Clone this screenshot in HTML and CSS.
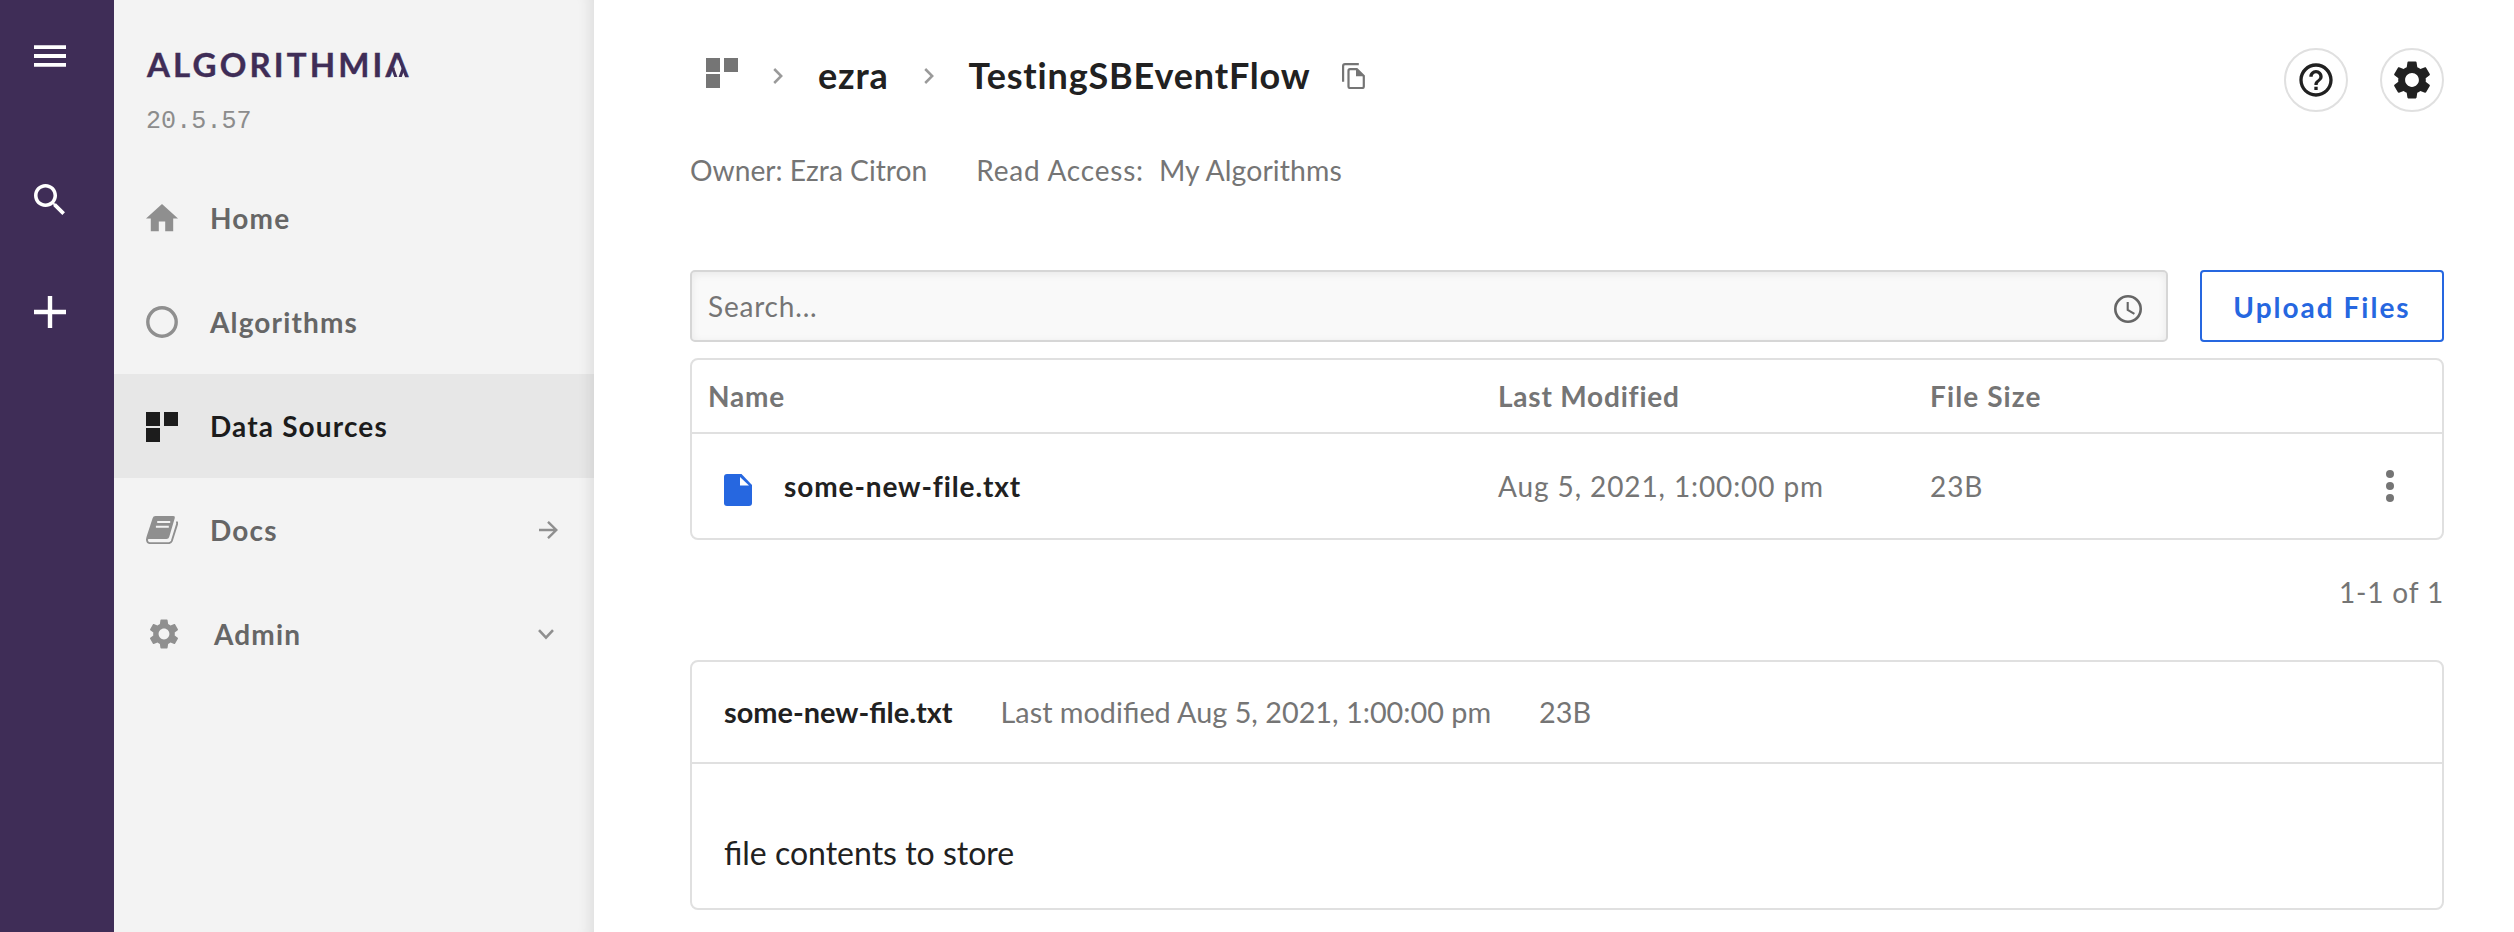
FILE: index.html
```html
<!DOCTYPE html>
<html lang="en">
<head>
<meta charset="utf-8">
<title>TestingSBEventFlow</title>
<link rel="stylesheet" href="styles.css">
</head>
<body>
<div class="app">
  <div class="rail">
    <svg class="rail-menu" viewBox="0 0 32 22"><path d="M0 2.1h32M0 11h32M0 19.9h32" stroke="#fff" stroke-width="3.8"/></svg>
    <svg class="rail-search" viewBox="3 3 17.5 17.5"><path fill="#fff" d="M15.5 14h-.79l-.28-.27C15.41 12.59 16 11.11 16 9.5 16 5.91 13.09 3 9.5 3S3 5.91 3 9.5 5.91 16 9.5 16c1.61 0 3.09-.59 4.23-1.57l.27.28v.79l5 4.99L20.49 19l-4.99-5zm-6 0C7.01 14 5 11.99 5 9.5S7.01 5 9.5 5 14 7.01 14 9.5 11.99 14 9.5 14z"/></svg>
    <svg class="rail-add" viewBox="0 0 32 32"><path d="M0 16h32M16 0v32" stroke="#fff" stroke-width="4.4"/></svg>
  </div>

  <aside class="sidebar">
    <div class="brand">ALGORITHMI<span class="brand-end">A<svg class="brand-mark" viewBox="0 0 24 24"><path d="M12 6.5L19.2 24.5H4.8Z" fill="#f3f3f3"/><path d="M6.6 15l3.4 9.4M17.4 15l-3.4 9.4" stroke="#3f2d57" stroke-width="3"/></svg></span></div>
    <div class="version">20.5.57</div>
    <nav class="nav">
      <a class="nav-item"><svg class="ico-home" viewBox="2 3 20 17.5" preserveAspectRatio="none"><path fill="#8f8f8f" d="M10 20v-6h4v6h5v-8h3L12 3 2 12h3v8z"/></svg><span>Home</span></a>
      <a class="nav-item"><svg class="ico-32" viewBox="0 0 32 32"><circle cx="16" cy="16" r="14.2" fill="none" stroke="#8f8f8f" stroke-width="3.4"/></svg><span>Algorithms</span></a>
      <a class="nav-item active"><svg class="ico-grid" viewBox="0 0 32 30"><path fill="#1c1c1c" d="M0 0h14v14H0zM18 0h14v14H18zM0 16h14v14H0z"/></svg><span>Data Sources</span></a>
      <a class="nav-item"><svg class="ico-book" viewBox="0 0 32 28"><path fill="#8f8f8f" d="M9.5 0H27.3Q29.4 0 28.8 2L23.2 21Q22.6 23 20.5 23H3Q1 23 0 24.5Q0 22 .8 20L6.6 2.2Q7.2 0 9.5 0Z"/><path fill="none" stroke="#8f8f8f" stroke-width="1.9" d="M30.3 5.8Q31.6 6.5 31 8.4L25.8 25Q25 27.1 22.6 27.1H4Q1 27.1.9 23"/><path stroke="#f3f3f3" stroke-width="1.9" d="M11.2 6H24.2M9.9 10.7H22.8"/></svg><span>Docs</span><svg class="nav-arrow" viewBox="0 0 19 18"><path fill="none" stroke="#8f8f8f" stroke-width="2.4" d="M0 9H17M9 .8L17.3 9L9 17.2"/></svg></a>
      <a class="nav-item"><svg class="ico-gear" viewBox="0 0 24 24"><path fill="#8f8f8f" d="M19.14 12.94c.04-.3.06-.61.06-.94 0-.32-.02-.64-.07-.94l2.03-1.58c.18-.14.23-.41.12-.61l-1.92-3.32c-.12-.22-.37-.29-.59-.22l-2.39.96c-.5-.38-1.03-.7-1.62-.94l-.36-2.54c-.04-.24-.24-.41-.48-.41h-3.84c-.24 0-.43.17-.47.41l-.36 2.54c-.59.24-1.13.57-1.62.94l-2.39-.96c-.22-.08-.47 0-.59.22L2.74 8.87c-.12.21-.08.47.12.61l2.03 1.58c-.05.3-.09.63-.09.94s.02.64.07.94l-2.03 1.58c-.18.14-.23.41-.12.61l1.92 3.32c.12.22.37.29.59.22l2.39-.96c.5.38 1.03.7 1.62.94l.36 2.54c.05.24.24.41.48.41h3.84c.24 0 .44-.17.47-.41l.36-2.54c.59-.24 1.13-.56 1.62-.94l2.39.96c.22.08.47 0 .59-.22l1.92-3.32c.12-.22.07-.47-.12-.61l-2.01-1.58zM12 15.6c-1.98 0-3.6-1.62-3.6-3.6s1.62-3.6 3.6-3.6 3.6 1.62 3.6 3.6-1.62 3.6-3.6 3.6z"/></svg><span>Admin</span><svg class="nav-chevron" viewBox="0 0 16 11"><path fill="none" stroke="#8f8f8f" stroke-width="2.6" d="M1 1.2L8 8.6L15 1.2"/></svg></a>
    </nav>
  </aside>

  <main class="main">
    <header class="header">
      <div class="crumbs">
        <svg class="ico-grid" viewBox="0 0 32 30"><path fill="#757575" d="M0 0h14v14H0zM18 0h14v14H18zM0 16h14v14H0z"/></svg>
        <svg class="crumb-sep first" viewBox="0 0 10 16"><path fill="none" stroke="#9a9a9a" stroke-width="2.5" d="M1.2 1L8.2 8L1.2 15"/></svg>
        <span class="crumb owner">ezra</span>
        <svg class="crumb-sep second" viewBox="0 0 10 16"><path fill="none" stroke="#9a9a9a" stroke-width="2.5" d="M1.2 1L8.2 8L1.2 15"/></svg>
        <span class="crumb">TestingSBEventFlow</span>
        <svg class="ico-copy" viewBox="0 0 24 26"><path fill="none" stroke="#757575" stroke-width="2.2" d="M1.1 18.8V3Q1.1 1.1 3 1.1H16.8M8 6.2H14.8L21.8 13V23.5Q21.8 25 20.3 25H8Q6.5 25 6.5 23.5V7.7Q6.5 6.2 8 6.2Z"/><path fill="#757575" d="M14 6.2V13.2H22Z"/></svg>
      </div>
      <div class="actions">
        <button class="round"><svg class="ico-help" viewBox="0 0 24 24"><path fill="#212121" d="M11 18h2v-2h-2v2zm1-16C6.48 2 2 6.48 2 12s4.48 10 10 10 10-4.48 10-10S17.52 2 12 2zm0 18c-4.41 0-8-3.59-8-8s3.59-8 8-8 8 3.59 8 8-3.59 8-8 8zm0-14c-2.21 0-4 1.79-4 4h2c0-1.1.9-2 2-2s2 .9 2 2c0 2-3 1.75-3 5h2c0-2.25 3-2.5 3-5 0-2.21-1.79-4-4-4z"/></svg></button>
        <button class="round"><svg class="ico-settings" viewBox="0 0 24 24"><path fill="#212121" d="M19.14 12.94c.04-.3.06-.61.06-.94 0-.32-.02-.64-.07-.94l2.03-1.58c.18-.14.23-.41.12-.61l-1.92-3.32c-.12-.22-.37-.29-.59-.22l-2.39.96c-.5-.38-1.03-.7-1.62-.94l-.36-2.54c-.04-.24-.24-.41-.48-.41h-3.84c-.24 0-.43.17-.47.41l-.36 2.54c-.59.24-1.13.57-1.62.94l-2.39-.96c-.22-.08-.47 0-.59.22L2.74 8.87c-.12.21-.08.47.12.61l2.03 1.58c-.05.3-.09.63-.09.94s.02.64.07.94l-2.03 1.58c-.18.14-.23.41-.12.61l1.92 3.32c.12.22.37.29.59.22l2.39-.96c.5.38 1.03.7 1.62.94l.36 2.54c.05.24.24.41.48.41h3.84c.24 0 .44-.17.47-.41l.36-2.54c.59-.24 1.13-.56 1.62-.94l2.39.96c.22.08.47 0 .59-.22l1.92-3.32c.12-.22.07-.47-.12-.61l-2.01-1.58zM12 15.6c-1.98 0-3.6-1.62-3.6-3.6s1.62-3.6 3.6-3.6 3.6 1.62 3.6 3.6-1.62 3.6-3.6 3.6z"/></svg></button>
      </div>
    </header>

    <div class="meta">
      <span class="meta-owner">Owner: Ezra Citron</span>
      <span class="meta-label">Read Access:</span>
      <span class="meta-value">My Algorithms</span>
    </div>

    <div class="toolbar">
      <div class="search">
        <span>Search...</span>
        <svg class="ico-clock" viewBox="0 0 28 28"><circle cx="14" cy="14" r="12.7" fill="none" stroke="#666" stroke-width="2.6"/><path fill="none" stroke="#666" stroke-width="2.1" d="M13.7 7V14.8L20.4 18.8"/></svg>
      </div>
      <button class="upload">Upload Files</button>
    </div>

    <section class="table">
      <div class="row head">
        <span class="th-name">Name</span>
        <span class="th-mod">Last Modified</span>
        <span class="th-size">File Size</span>
      </div>
      <div class="row file">
        <div class="file-name">
          <svg class="ico-file" viewBox="0 0 28 32"><path fill="#2667e0" d="M3 0H17.5L28 11V29Q28 32 25 32H3Q0 32 0 29V3Q0 0 3 0Z"/><path fill="#fff" d="M16 3V11.6H25Z"/></svg>
          <span>some-new-file.txt</span>
        </div>
        <span class="td-date">Aug 5, 2021, 1:00:00 pm</span>
        <span class="td-size">23B</span>
        <svg class="ico-dots" viewBox="0 0 8 32"><g fill="#757575"><circle cx="4" cy="4" r="4"/><circle cx="4" cy="16" r="4"/><circle cx="4" cy="28" r="4"/></g></svg>
      </div>
    </section>

    <div class="pager">1-1 of 1</div>

    <section class="preview">
      <div class="preview-head">
        <span class="preview-name">some-new-file.txt</span>
        <span>Last modified Aug 5, 2021, 1:00:00 pm</span>
        <span>23B</span>
      </div>
      <div class="preview-body">file contents to store</div>
    </section>
  </main>
</div>
</body>
</html>
```
FILE: styles.css
```css
* { box-sizing: border-box; }

body {
  margin: 0;
  background: #fff;
  color: #757575;
  font: 28px/40px Lato, "Open Sans", sans-serif;
}

svg { display: block; flex: none; }
button { font: inherit; cursor: pointer; }

.app { display: flex; height: 932px; overflow: hidden; }

.rail { flex: none; width: 114px; padding: 45px 0 0 34px; background: #3f2d57; }
.rail-menu { width: 32px; height: 22px; }
.rail-search { width: 31px; height: 31px; margin-top: 117px; }
.rail-add { width: 32px; height: 32px; margin-top: 81px; }

.sidebar {
  flex: none;
  width: 480px;
  padding-top: 44px;
  background: #f3f3f3;
  box-shadow: inset -16px 0 14px -12px rgba(0, 0, 0, 0.09);
}
.brand {
  padding-left: 33px;
  color: #3f2d57;
  font-size: 33px;
  font-weight: 700;
  letter-spacing: 3.15px;
  white-space: nowrap;
  -webkit-text-stroke: 0.4px #3f2d57;
}
.brand-end { position: relative; display: inline-block; }
.brand-mark { position: absolute; left: 0; top: 9px; width: 24px; height: 24px; }
.version {
  margin: 23px 0 29px 32px;
  color: #8c8c8c;
  font: 25px/30px "Liberation Mono", monospace;
  letter-spacing: 0.1px;
}

.nav-item {
  display: flex;
  align-items: center;
  gap: 32px;
  height: 104px;
  padding: 0 36px 0 32px;
  color: #666;
  font-weight: 700;
  letter-spacing: 1.15px;
}
.active { color: #1c1c1c; background: rgba(0, 0, 0, 0.047); }
.ico-home { width: 32px; height: 28px; }
.ico-32 { width: 32px; height: 32px; margin-top: -1px; }
.ico-grid { width: 32px; height: 30px; }
.nav-item .ico-grid { margin-top: 2px; }
.ico-book { width: 32px; height: 28px; }
.ico-gear { width: 36px; height: 36px; }
.nav-arrow { width: 19px; height: 18px; margin-left: auto; }
.nav-chevron { width: 16px; height: 11px; margin: 0 4px 0 auto; }

.main { flex: 1; min-width: 0; padding: 48px 70px 0 96px; }

.header { display: flex; justify-content: space-between; height: 64px; }
.crumbs {
  display: flex;
  align-items: center;
  height: 54px;
  padding-left: 16px;
  color: #212121;
  font-size: 36px;
  font-weight: 700;
  letter-spacing: 0.83px;
}
.crumbs .ico-grid { margin-bottom: 4px; }
.crumb { line-height: 50px; }
.crumb-sep { width: 10px; height: 16px; margin-top: 1px; }
.first { margin-left: 35px; margin-right: 35px; }
.second { margin-left: 35px; margin-right: 35px; }
.ico-copy { width: 24px; height: 26px; margin: 2px 0 0 31px; }
.actions { display: flex; gap: 32px; }
.round {
  display: flex;
  align-items: center;
  justify-content: center;
  width: 64px;
  height: 64px;
  padding: 0;
  border: 2px solid #e0e0e0;
  border-radius: 50%;
  background: #fff;
}
.ico-help { width: 40px; height: 40px; }
.ico-settings { width: 46px; height: 46px; }

.meta { display: flex; margin-top: 38px; font-size: 28.2px; }
.meta-owner { margin-right: 49px; }
.meta-label { margin-right: 15px; font-size: 28px; letter-spacing: 0.8px; }
.meta-value { font-size: 28.4px; letter-spacing: 0.1px; }

.toolbar { display: flex; gap: 32px; height: 72px; margin-top: 80px; }
.search {
  flex: 1;
  display: flex;
  align-items: center;
  justify-content: space-between;
  padding: 0 24px 0 16px;
  border: 2px solid #d6d6d6;
  border-radius: 5px;
  background: #f9f9f9;
  box-shadow: inset 0 2px 8px rgba(0, 0, 0, 0.07);
  letter-spacing: 0.8px;
}
.search span { padding-bottom: 1px; }
.ico-clock { width: 28px; height: 28px; margin-top: 6px; }
.upload {
  width: 244px;
  padding: 2px 0 0;
  border: 2px solid #2667e0;
  border-radius: 4px;
  background: #fff;
  color: #2667e0;
  font-weight: 700;
  letter-spacing: 2px;
}

.table { margin-top: 16px; border: 2px solid #e0e0e0; border-radius: 8px; }
.row {
  display: grid;
  grid-template-columns: 806px 432px 1fr 8px;
  align-items: center;
  padding-right: 48px;
}
.head { height: 74px; border-bottom: 2px solid #e0e0e0; font-weight: 700; letter-spacing: 0.8px; }
.th-name { padding-left: 16px; }
.th-size { letter-spacing: 1.1px; }
.file { height: 104px; letter-spacing: 0.9px; }
.file-name {
  display: flex;
  align-items: center;
  gap: 32px;
  padding-left: 32px;
  color: #212121;
  font-weight: 700;
  letter-spacing: 0.9px;
}
.ico-file { width: 28px; height: 32px; margin-top: 8px; }
.ico-dots { width: 8px; height: 32px; }

.pager { margin-top: 32px; text-align: right; letter-spacing: 0.85px; }

.preview { margin-top: 48px; border: 2px solid #e0e0e0; border-radius: 8px; }
.preview-head {
  display: flex;
  align-items: center;
  gap: 48px;
  height: 102px;
  padding: 0 32px;
  border-bottom: 2px solid #e0e0e0;
  font-size: 28.8px;
}
.preview-name { color: #212121; font-size: 28.9px; font-weight: 700; }
.preview-body { height: 144px; padding: 69px 32px 0; color: #212121; font-size: 32px; }
```
